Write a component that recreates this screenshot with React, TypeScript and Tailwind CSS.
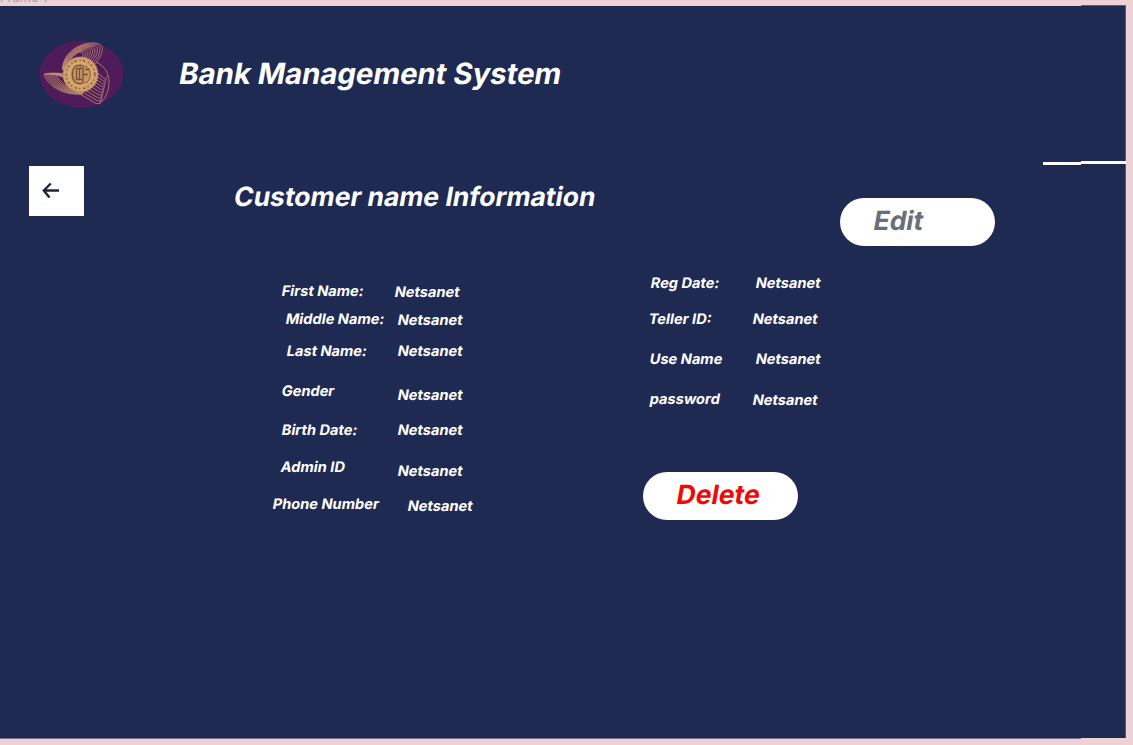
type Entry = { text: string; place: string };

const personalLabels: Entry[] = [
  { text: "First Name:", place: "ml-[9px]" },
  { text: "Middle Name:", place: "ml-[12.5px] mt-[8px]" },
  { text: "Last Name:", place: "ml-[13.5px] mt-[12px]" },
  { text: "Gender", place: "ml-[9px] mt-[20px]" },
  { text: "Birth Date:", place: "ml-[9px] mt-[19px]" },
  { text: "Admin ID", place: "ml-[8px] mt-[17px]" },
  { text: "Phone Number", place: "mt-[17px]" },
];

const personalValues: Entry[] = [
  { text: "Netsanet", place: "mt-[1px]" },
  { text: "Netsanet", place: "ml-[3px] mt-[8px]" },
  { text: "Netsanet", place: "ml-[3px] mt-[11px]" },
  { text: "Netsanet", place: "ml-[3px] mt-[24px]" },
  { text: "Netsanet", place: "ml-[3px] mt-[15px]" },
  { text: "Netsanet", place: "ml-[3px] mt-[21px]" },
  { text: "Netsanet", place: "ml-[13px] mt-[15px]" },
];

const accountLabels: Entry[] = [
  { text: "Reg Date:", place: "ml-[2px]" },
  { text: "Teller ID:", place: "mt-[16px]" },
  { text: "Use Name", place: "ml-[1px] mt-[20px]" },
  { text: "password", place: "ml-[1px] mt-[20px]" },
];

const accountValues: Entry[] = [
  { text: "Netsanet", place: "ml-[3px]" },
  { text: "Netsanet", place: "mt-[16px]" },
  { text: "Netsanet", place: "ml-[3px] mt-[20px]" },
  { text: "Netsanet", place: "mt-[21px]" },
];

function Slanted({ children }: { children: string }) {
  return <span className="inline-block origin-[0_75%] -skew-x-[10deg] whitespace-nowrap">{children}</span>;
}

function Column({ entries, className }: { entries: Entry[]; className: string }) {
  return (
    <div className={`flex shrink-0 flex-col text-[14.6px] leading-[20px] ${className}`}>
      {entries.map((entry, i) => (
        <div key={i} className={`h-[20px] ${entry.place}`}>
          <Slanted>{entry.text}</Slanted>
        </div>
      ))}
    </div>
  );
}

const steps = (n: number) => Array.from({ length: n }, (_, i) => i);

function Logo() {
  return (
    <svg className="ml-[39px] mt-[34px] h-[68px] w-[85px] shrink-0" viewBox="0 0 85 68" fill="none">
      <ellipse cx="42.5" cy="34" rx="42" ry="33.5" fill="#501b59" />
      <g stroke="#c69373" strokeWidth="0.75">
        {steps(9).map((i) => (
          <path
            key={`t${i}`}
            d={`M${23.5 + i * 0.3} ${30 - i * 0.2}C${23 + i * 0.8} ${13 + i * 0.9} ${42 - i * 0.6} ${1 + i * 1.4} ${57 - i * 2} ${3.2 + i * 1.1}C${66 - i * 2.3} ${4 + i * 1.1} ${65 - i * 2.6} ${14 + i * 0.5} ${56 - i * 2.8} 24`}
          />
        ))}
        {steps(8).map((i) => (
          <path
            key={`l${i}`}
            d={`M${5 + i * 1.7} ${34 + i * 0.1}C${12 + i * 1.2} ${32.5 + i * 0.3} 20 ${33 + i * 0.5} 27 ${34 + i * 0.6}M${5 + i * 1.7} ${34 + i * 0.1}C${8 + i * 2} ${44 - i * 0.2} ${22 + i} ${56 - i * 0.8} 44 ${54 - i * 0.5}`}
          />
        ))}
        {steps(10).map((i) => (
          <path
            key={`r${i}`}
            d={`M${36 + i * 1.8} ${51 - i * 2.5}L${57 + i * 0.7} ${63.5 - i * 3}C${61 + i * 0.5} ${64.5 - i * 2.7} ${62 + i * 0.6} ${61 - i * 2.5} ${62.5 + i * 0.6} ${58 - i * 2.4}`}
          />
        ))}
        <path d="M57 22C67 27 70 34 70 42C70 51 66 60 60 64" />
      </g>
      <circle cx="41.5" cy="34.500" r="17.8" fill="#d0a16b" />
      <circle cx="41.5" cy="34.500" r="17.3" stroke="#9b6841" strokeWidth="1" strokeDasharray="1 1.2" />
      <circle cx="41.5" cy="34.500" r="14.300" stroke="#80593a" strokeWidth="1.5" strokeDasharray="2 3.1 1.2 2.4" />
      <circle cx="41.5" cy="34.500" r="11.3" fill="#c89762" stroke="#e5bd83" strokeWidth="0.7" />
      <g transform="translate(0 -1.5)" stroke="#76513a" strokeWidth="1.3">
        <path d="M43 27H39C31.500 27 31.500 44.500 39 45H43" />
        <path d="M43 30H37.500V41H43M40.500 30V41M44 27V45M44 36H49M46 31H50" />
        <path d="M46 27.500C53 29 53 43 46 44.500" strokeWidth="0.8" />
      </g>
    </svg>
  );
}

export default function App() {
  return (
    <div className="h-[745px] w-[1133px] overflow-hidden bg-[#edd1d5] font-['Inter',sans-serif] [font-optical-sizing:none]">
      <div className="flex h-[6px] items-end justify-between overflow-hidden">
        <span className="mb-[2px] text-[13px] leading-[13px] text-[#aaa0a9]">Frame 1</span>
        <div className="mr-[7px] h-px w-[45px] bg-[#625c7b]" />
      </div>
      <main className="h-[732px] w-[1126px] border-r border-r-[#59597a] bg-[#1f2a52] font-bold text-white">
        <header className="flex h-[150px] items-start">
          <Logo />
          <h1 className="ml-[53.5px] mt-[50px] text-[29.3px] leading-[36px]">
            <Slanted>Bank Management System</Slanted>
          </h1>
        </header>

        <section className="flex h-[100px] items-start">
          <button aria-label="Back" className="ml-[29px] mt-[10px] flex h-[50px] w-[55px] shrink-0 bg-white">
            <svg className="ml-[12px] mt-[15px] h-[18px] w-[20px]" viewBox="0 0 20 18" fill="none">
              <path d="M18 9.500H3M9.800 2.500L2.800 9.500L8.500 16.500" stroke="#172638" strokeWidth="2.4" />
            </svg>
          </button>
          <h2 className="ml-[148.5px] mt-[22px] w-[607.5px] shrink-0 text-[26.45px] leading-[36px]">
            <Slanted>Customer name Information</Slanted>
          </h2>
          <button className="mt-[42px] h-[48px] w-[155px] shrink-0 rounded-full bg-white pl-[32px] text-left text-[26.5px] leading-[45px] text-[#66707c]">
            <span className="block h-[48px]">
              <Slanted>Edit</Slanted>
            </span>
          </button>
          <div className="ml-[48px] mt-[6px] flex shrink-0 items-start">
            <div className="h-[3px] w-[38px] bg-white" />
            <div className="-mt-px h-[3px] w-[45px] bg-white" />
          </div>
        </section>

        <section className="flex items-start">
          <Column entries={personalLabels} className="ml-[272.2px] mt-[25px] w-[122px]" />
          <Column entries={personalValues} className="mt-[25px] w-[248.8px]" />
          <div className="flex flex-col">
            <div className="flex">
              <Column entries={accountLabels} className="ml-[5.2px] mt-[17px] w-[104px]" />
              <Column entries={accountValues} className="mt-[17px]" />
            </div>
            <button className="mt-[62px] h-[48px] w-[155px] rounded-full bg-white pl-[32px] text-left text-[26.5px] leading-[45px] text-[#f20606]">
              <span className="block h-[48px]">
                <Slanted>Delete</Slanted>
              </span>
            </button>
          </div>
        </section>
      </main>
      <div className="h-px w-[1081px] bg-[#77708c]" />
    </div>
  );
}
